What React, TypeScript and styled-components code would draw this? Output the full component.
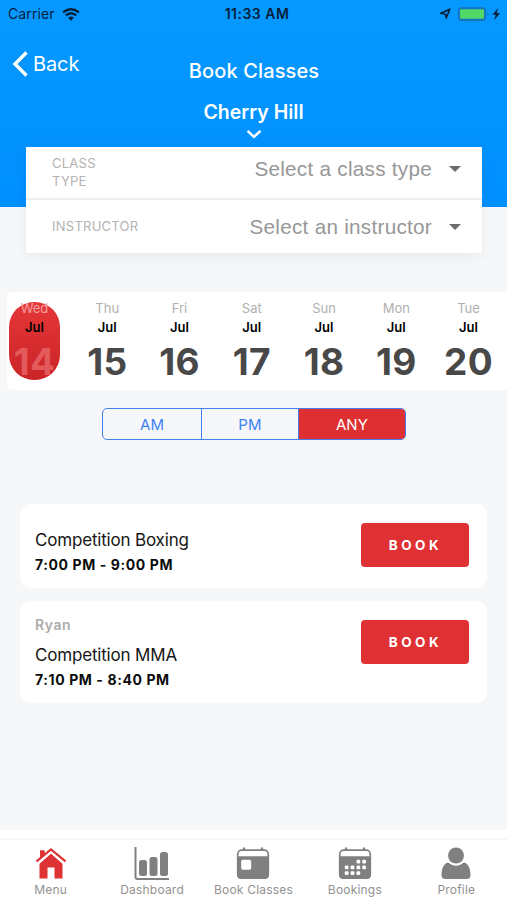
import React from "react";
import styled, { createGlobalStyle, css } from "styled-components";

const Global = createGlobalStyle`
  * { box-sizing: border-box; }
  body { margin: 0; background: #f6f7f9; font-family: Inter, "Liberation Sans", sans-serif; }
  button { font: inherit; padding: 0; border: 0; background: none; }
`;

const Screen = styled.div`
  width: 507px;
  height: 900px;
  display: flex;
  flex-direction: column;
  overflow: hidden;
  background: #f6f7f9;
`;

const Header = styled.header`
  height: 207px;
  flex: none;
  background: linear-gradient(#0699ff, #008fff);
  color: #fff;
`;

const StatusBar = styled.div`
  height: 28px;
  display: grid;
  grid-template-columns: 1fr auto 1fr;
  align-items: center;
  padding: 0 4px 0 8px;
  color: #04213b;
  font-size: 14px;
  line-height: 28px;
`;

const Carrier = styled.div`
  display: flex;
  align-items: center;
  gap: 7px;
  letter-spacing: 0.1px;
`;

const Clock = styled.div`
  font-weight: 600;
  letter-spacing: 0.5px;
  padding-left: 3px;
`;

const Indicators = styled.div`
  display: flex;
  align-items: center;
  justify-content: flex-end;
`;

const NavBar = styled.div`
  height: 71px;
  display: grid;
  grid-template-columns: 1fr auto 1fr;
`;

const BackButton = styled.button`
  display: flex;
  align-items: center;
  gap: 5px;
  height: 26px;
  margin: 23px 0 0 12px;
  color: #fff;
  font-size: 20px;
  letter-spacing: -0.1px;
`;

const Title = styled.h1`
  margin: 30px 0 0;
  padding-left: 1px;
  font-size: 20px;
  line-height: 26px;
  font-weight: 500;
  letter-spacing: 0.12px;
`;

const Location = styled.button`
  width: 100%;
  display: flex;
  flex-direction: column;
  align-items: center;
  color: #fff;
  font-size: 19.5px;
  line-height: 26px;
  font-weight: 600;
  gap: 4px;
`;

const Filters = styled.section`
  width: 456px;
  height: 106px;
  flex: none;
  margin: -60px 0 0 26px;
  background: #fff;
  box-shadow: 0 3px 12px rgba(0, 0, 0, 0.06);
`;

const FilterRow = styled.div<{ $divided?: boolean }>`
  height: 53px;
  display: flex;
  justify-content: space-between;
  align-items: ${(p) => (p.$divided ? "flex-start" : "center")};
  padding: ${(p) => (p.$divided ? "8px 21px 0 26px" : "0 21px 0 26px")};
  border-bottom: ${(p) => (p.$divided ? "2px solid #eeeeee" : "0")};
`;

const FilterLabel = styled.span<{ $narrow?: boolean }>`
  width: ${(p) => (p.$narrow ? "60px" : "auto")};
  color: #b3b3b3;
  font-size: 13px;
  line-height: 17.5px;
  letter-spacing: 0.25px;
`;

const Picker = styled.button`
  display: flex;
  align-items: center;
  gap: 17px;
  color: #979797;
  font-family: "Liberation Sans", Arial, sans-serif;
  font-size: 20.7px;
  letter-spacing: 0.27px;
  line-height: 28px;
`;

const Caret = styled.span`
  border: 6.5px solid transparent;
  border-top-color: #6c6c6c;
  border-bottom: 0;
`;

const Week = styled.section`
  height: 98px;
  flex: none;
  margin: 39px 0 0 7px;
  padding-top: 7px;
  display: grid;
  grid-template-columns: repeat(7, 72.25px);
  background: #fff;
  border-radius: 5px 0 0 5px;
  overflow: hidden;
`;

const Day = styled.div<{ $active?: boolean }>`
  display: flex;
  flex-direction: column;
  align-items: center;
  height: 81px;
  margin-left: ${(p) => (p.$active ? "2px" : "-8px")};
  width: ${(p) => (p.$active ? "51px" : "72px")};
  color: #484848;
  ${(p) =>
    p.$active &&
    css`
      margin-top: 3px;
      height: 78px;
      border-radius: 25px;
      background: linear-gradient(#e63739, #ca2427);
      color: #e4595b;
    `}
`;

const Weekday = styled.span<{ $active?: boolean }>`
  height: 22px;
  margin-top: ${(p) => (p.$active ? "-3px" : "0")};
  color: ${(p) => (p.$active ? "#f1a0a0" : "#b0b0b0")};
  font-size: 13px;
  line-height: 18px;
`;

const Month = styled.span`
  height: 22px;
  color: #000;
  font-size: 13px;
  line-height: 21px;
  font-weight: 600;
`;

const DateNumber = styled.span`
  font-size: 37px;
  line-height: 43px;
  margin-top: 2px;
  font-weight: 650;
  letter-spacing: 0.3px;
`;

const Segments = styled.div`
  width: 304px;
  height: 32px;
  flex: none;
  margin: 18px 0 0 102px;
  display: grid;
  grid-template-columns: 98px 97px 1fr;
  border: 1px solid #3f80ec;
  border-radius: 5px;
  overflow: hidden;
`;

const Segment = styled.button<{ $active?: boolean }>`
  color: ${(p) => (p.$active ? "#fff" : "#3d82f5")};
  background: ${(p) => (p.$active ? "#de3032" : "transparent")};
  font-size: 15px;
  letter-spacing: 0.1px;
  & + & { border-left: 1px solid #3f80ec; }
`;

const ClassList = styled.main`
  flex: 1;
  padding: 64px 20px 0;
  display: flex;
  flex-direction: column;
  gap: 13px;
`;

const ClassCard = styled.article<{ $tall?: boolean }>`
  height: ${(p) => (p.$tall ? 102 : 84)}px;
  padding: ${(p) => (p.$tall ? "13px" : "23px")} 18px 0 15px;
  display: flex;
  justify-content: space-between;
  background: #fff;
  border-radius: 11px;
`;

const ClassInfo = styled.div`
  display: flex;
  flex-direction: column;
`;

const Coach = styled.span`
  height: 28px;
  color: #acacac;
  font-size: 14px;
  line-height: 22px;
  font-weight: 600;
  letter-spacing: 0.6px;
`;

const ClassName = styled.span`
  height: 25px;
  color: #161616;
  font-size: 17px;
  line-height: 26px;
  letter-spacing: -0.18px;
`;

const ClassTime = styled.span`
  color: #0c0c0c;
  font-size: 14px;
  line-height: 25px;
  font-weight: 700;
  letter-spacing: 0.6px;
`;

const BookButton = styled.button<{ $tall?: boolean }>`
  width: 108px;
  height: 44px;
  margin-top: ${(p) => (p.$tall ? "6px" : "-4px")};
  padding: 0 0 1px 1px;
  border-radius: 4px;
  background: #df3133;
  color: #fff;
  font-size: 13.5px;
  font-weight: 700;
  letter-spacing: 3.5px;
`;

const TabBar = styled.nav`
  height: 70px;
  flex: none;
  display: grid;
  grid-template-columns: repeat(5, 1fr);
  padding-top: 16px;
  background: linear-gradient(#fff 8px, #f6f6f6 8px, #f6f6f6 10px, #fff 10px);
`;

const Tab = styled.button<{ $active?: boolean }>`
  display: flex;
  flex-direction: column;
  align-items: center;
  color: #929292;
  font-size: 12px;
  line-height: 20px;
  letter-spacing: 0.2px;
  svg { flex: none; color: ${(p) => (p.$active ? "#de3234" : "#808080")}; }
`;

const WifiIcon = () => (
  <svg width="18" height="13" viewBox="0 0 18 13" fill="none" stroke="currentColor" strokeWidth="2.3">
    <path d="M1 4.4Q9-2 17 4.4M3.7 7.4Q9 3 14.3 7.4" />
    <path d="M6 9.7Q9 7.3 12 9.7L9 12.7Z" fill="currentColor" stroke="none" />
  </svg>
);

const StatusIcons = () => (
  <svg width="64" height="18" viewBox="0 0 64 18">
    <path d="M1.800 8.300 10.800 4.200 7.200 13 6.500 9.200Z" fill="none" stroke="#08213b" strokeWidth="1.6" strokeLinejoin="round" />
    <rect x="19.500" y="2.800" width="27" height="12.500" rx="2.800" fill="#1579c8" stroke="#1673bd" strokeWidth="1.200" />
    <rect x="21" y="4.300" width="24" height="9.500" rx="1.200" fill="#50d969" />
    <path d="M48.500 7v4q2-2 0-4" fill="#1769ad" />
    <path d="m59 3-5.500 6.800h3.200l-1.500 5.500 6-7.300h-3.400Z" fill="#08213b" />
  </svg>
);

const HomeIcon = () => (
  <svg width="32" height="34" viewBox="0 0 32 34" fill="currentColor">
    <path d="M5 4.500h4.500v6L5 14.500Z" />
    <path d="M4.500 17.800 16 7.600l11.500 10.200v14.700h-8V21.500h-7v11h-8Z" />
    <path d="M2 17.200 16 5.200l14 12" fill="none" stroke="#fff" strokeWidth="3.200" />
    <path d="M1.500 15.300 16 3.400l14.500 11.900" fill="none" stroke="currentColor" strokeWidth="2.200" />
    <path d="M5 4.500h4.500v4.200L5 12.300Z" />
  </svg>
);

const ChartIcon = () => (
  <svg width="36" height="34" viewBox="0 0 36 34" fill="currentColor">
    <path d="M1.500 1v30q0 2 2 2H35" fill="none" stroke="currentColor" strokeWidth="2" />
    <rect x="5" y="14" width="8" height="16" rx="2.500" />
    <rect x="15.500" y="11" width="8" height="19" rx="2.500" />
    <rect x="26" y="6" width="8" height="24" rx="2.500" />
  </svg>
);

const CalendarIcon = ({ dots = false }: { dots?: boolean }) => (
  <svg width="34" height="34" viewBox="0 0 34 34" fill="currentColor">
    <rect x="1.700" y="4.200" width="30.600" height="28" rx="4" fill="#fff" stroke="currentColor" strokeWidth="1.700" />
    <path d="M1 10.200h32v18.300q0 4.500-4.500 4.500h-23Q1 33 1 28.500Z" />
    <path d="M8 1.500v3M26 1.500v3" stroke="currentColor" strokeWidth="2.300" />
    {dots ? (
      <g fill="#fff">
        {[[18.5, 13.7], [24.3, 13.7], [6.8, 19.5], [12.6, 19.5], [18.5, 19.5], [24.3, 19.5], [6.8, 25.2], [12.6, 25.2], [18.5, 25.2]].map(([x, y]) => (
          <rect key={`${x}-${y}`} x={x} y={y} width="3.700" height="3.700" rx="1" />
        ))}
      </g>
    ) : (
      <rect x="5.200" y="13.700" width="10" height="10" rx="1.800" fill="#fff" />
    )}
  </svg>
);

const ProfileIcon = () => (
  <svg width="32" height="34" viewBox="0 0 32 34" fill="currentColor">
    <circle cx="16" cy="9.500" r="8" />
    <path d="M8 16.400q8 6.500 16 0c4.300 1 6.500 5.800 6.500 12.600 0 2.800-1 4-4 4h-21c-3 0-4-1.200-4-4C1.500 22.200 3.700 17.400 8 16.400Z" />
  </svg>
);

const days = [
  ["Wed", "14"], ["Thu", "15"], ["Fri", "16"], ["Sat", "17"], ["Sun", "18"], ["Mon", "19"], ["Tue", "20"],
];

const classes = [
  { name: "Competition Boxing", time: "7:00 PM - 9:00 PM" },
  { coach: "Ryan", name: "Competition MMA", time: "7:10 PM - 8:40 PM" },
];

const tabs = [
  { label: "Menu", icon: <HomeIcon /> },
  { label: "Dashboard", icon: <ChartIcon /> },
  { label: "Book Classes", icon: <CalendarIcon /> },
  { label: "Bookings", icon: <CalendarIcon dots /> },
  { label: "Profile", icon: <ProfileIcon /> },
];

export default function App() {
  return (
    <>
      <Global />
      <Screen>
        <Header>
          <StatusBar>
            <Carrier>Carrier <WifiIcon /></Carrier>
            <Clock>11:33 AM</Clock>
            <Indicators><StatusIcons /></Indicators>
          </StatusBar>
          <NavBar>
            <BackButton>
              <svg width="16" height="26" viewBox="0 0 16 26" fill="none" stroke="currentColor" strokeWidth="3.400">
                <path d="M14.500 1.500 3 13l11.500 11.500" />
              </svg>
              Back
            </BackButton>
            <Title>Book Classes</Title>
          </NavBar>
          <Location>
            Cherry Hill
            <svg width="16" height="10" viewBox="0 0 16 10" fill="none" stroke="currentColor" strokeWidth="2.500">
              <path d="m1.500 1.800 6.500 6 6.500-6" />
            </svg>
          </Location>
        </Header>
        <Filters>
          <FilterRow $divided>
            <FilterLabel $narrow>CLASS TYPE</FilterLabel>
            <Picker>Select a class type<Caret /></Picker>
          </FilterRow>
          <FilterRow>
            <FilterLabel>INSTRUCTOR</FilterLabel>
            <Picker>Select an instructor<Caret /></Picker>
          </FilterRow>
        </Filters>
        <Week>
          {days.map(([name, date], i) => (
            <Day key={date} $active={i === 0}>
              <Weekday $active={i === 0}>{name}</Weekday>
              <Month>Jul</Month>
              <DateNumber>{date}</DateNumber>
            </Day>
          ))}
        </Week>
        <Segments>
          <Segment>AM</Segment>
          <Segment>PM</Segment>
          <Segment $active>ANY</Segment>
        </Segments>
        <ClassList>
          {classes.map((c) => (
            <ClassCard key={c.name} $tall={!!c.coach}>
              <ClassInfo>
                {c.coach && <Coach>{c.coach}</Coach>}
                <ClassName>{c.name}</ClassName>
                <ClassTime>{c.time}</ClassTime>
              </ClassInfo>
              <BookButton $tall={!!c.coach}>BOOK</BookButton>
            </ClassCard>
          ))}
        </ClassList>
        <TabBar>
          {tabs.map((t, i) => (
            <Tab key={t.label} $active={i === 0}>{t.icon}{t.label}</Tab>
          ))}
        </TabBar>
      </Screen>
    </>
  );
}
